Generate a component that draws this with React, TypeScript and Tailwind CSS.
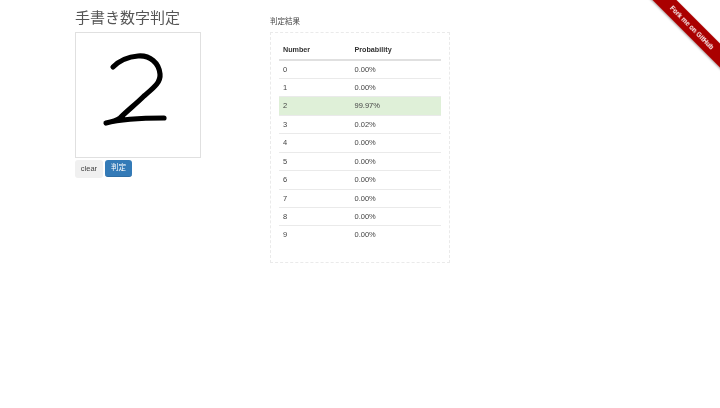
const rows = [
  { n: 0, p: "0.00%" },
  { n: 1, p: "0.00%" },
  { n: 2, p: "99.97%", hit: true },
  { n: 3, p: "0.02%" },
  { n: 4, p: "0.00%" },
  { n: 5, p: "0.00%" },
  { n: 6, p: "0.00%" },
  { n: 7, p: "0.00%" },
  { n: 8, p: "0.00%" },
  { n: 9, p: "0.00%" },
];

const font = "font-['Liberation_Sans','Noto_Sans_CJK_JP',sans-serif]";

export default function App() {
  return (
    <div className={`${font} relative h-[408px] w-[720px] overflow-hidden bg-white text-[#333]`}>
      <div className="flex pl-[75px] [will-change:transform]">
        <div className="w-[195px]">
          <h1 className="h-[32px] pt-[8px] text-[15px] leading-[20px] font-normal text-[#555]">手書き数字判定</h1>
          <div className="h-[126px] w-[126px] border border-[#e0e0e0]">
            <svg width="124" height="124" viewBox="0 0 124 124">
              <path
                d="M37 34 C43 28 50 24 62 23 C74 22 83 30 84 41 C85 50 76 56 68 63 C60 71 52 77 44 85 C40 88 35 89 30 90 C45 86 62 85 88 85"
                fill="none"
                stroke="#000"
                strokeWidth="5.2"
                strokeLinecap="round"
                strokeLinejoin="round"
              />
            </svg>
          </div>
          <div className="mt-[2px] flex gap-[2px]">
            <button className="h-[18px] w-[28px] rounded-[3px] bg-[#f0f0f0] text-[7.5px] leading-[18px] text-[#444]">clear</button>
            <button className="h-[17px] w-[27px] rounded-[3px] border-b border-[#2e6da4] bg-[#337ab7] text-[7.5px] leading-[16px] text-white">判定</button>
          </div>
        </div>
        <div className="w-[180px]">
          <p className="h-[32px] pt-[17px] text-[7.5px] leading-[10px] text-[#444]">判定結果</p>
          <div className="h-[231px] w-[180px] border border-dashed border-[#eaeaea] px-[8px] pt-[8px]">
            <div className="flex h-[19.5px] border-b-2 border-[#e0e0e0] px-[4px] text-[7.2px] leading-[18px] font-bold text-[#333]">
              <span className="w-[71.5px]">Number</span>
              <span>Probability</span>
            </div>
            {rows.map((r, i) => (
              <div
                key={r.n}
                className={`flex h-[18.45px] px-[4px] text-[7.5px] leading-[17.5px] text-[#444] ${i < 9 ? "border-b border-[#eaeaea]" : ""} ${r.hit ? "bg-[#dff0d8]" : ""}`}
              >
                <span className="w-[71.5px]">{r.n}</span>
                <span>{r.p}</span>
              </div>
            ))}
          </div>
        </div>
      </div>
      <div className="absolute top-[18.5px] right-[-37px] h-[17px] w-[130px] rotate-45 bg-[#aa0000] text-center text-[6.5px] leading-[17px] font-bold text-white shadow-[0_1px_2px_rgba(0,0,0,0.35)]">
        Fork me on GitHub
      </div>
    </div>
  );
}
